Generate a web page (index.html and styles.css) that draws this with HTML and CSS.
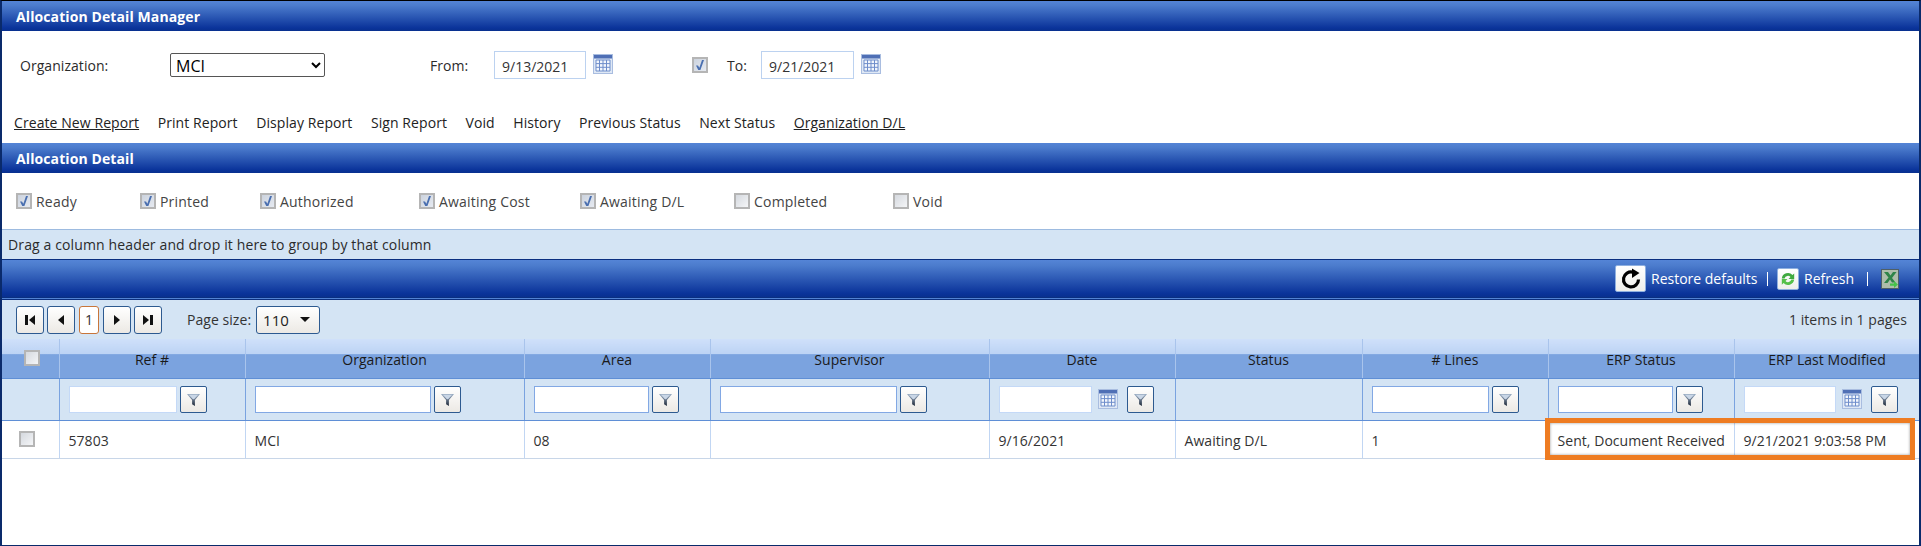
FILE: index.html
```html
<!DOCTYPE html>
<html lang="en">
<head>
<meta charset="utf-8">
<title>Allocation Detail Manager</title>
<link rel="stylesheet" href="styles.css">
</head>
<body>
<svg class="defs" width="0" height="0">
  <defs>
    <linearGradient id="fun" x1="0" y1="0" x2="0" y2="1"><stop offset="0" stop-color="#9fb2c9"/><stop offset="1" stop-color="#1f2a3a"/></linearGradient>
    <symbol id="cal" viewBox="0 0 20 20">
      <rect x="0.5" y="0.5" width="19" height="19" fill="#dfe8f5" stroke="#a9bde0"/>
      <rect x="1" y="1" width="18" height="3.5" fill="#4f6fb5"/>
      <path d="M3 6h14v11H3z" fill="#f2f6fc" stroke="#6f8ecb"/>
      <path d="M6.5 6v11M10 6v11M13.5 6v11M3 9.6h14M3 13.3h14" stroke="#6f8ecb" fill="none"/>
    </symbol>
    <symbol id="filter" viewBox="0 0 16 16">
      <path d="M1 2h14L9.5 8.5V15L6.5 13V8.5z" fill="url(#fun)"/>
      <path d="M3 3h10L8.6 7.6H7.4z" fill="#c9d6e6"/>
    </symbol>
  </defs>
</svg>
<div class="page">
  <header class="bar"><span class="bar-title">Allocation Detail Manager</span></header>
  <section class="form-row">
    <label class="f-org">Organization:</label>
    <select class="org-select"><option>MCI</option></select>
    <label class="f-from">From:</label>
    <input class="date" type="text" value="9/13/2021">
    <svg class="cal-top"><use href="#cal"/></svg>
    <span class="cb checked to-check"></span>
    <label class="f-to">To:</label>
    <input class="date" type="text" value="9/21/2021">
    <svg class="cal-top"><use href="#cal"/></svg>
  </section>
  <nav class="links">
    <a class="ul">Create New Report</a><a>Print Report</a><a>Display Report</a><a>Sign Report</a><a>Void</a><a>History</a><a>Previous Status</a><a>Next Status</a><a class="ul">Organization D/L</a>
  </nav>
  <header class="bar bar2"><span class="bar-title">Allocation Detail</span></header>
  <section class="checks">
    <label class="chk"><span class="cb checked"></span>Ready</label>
    <label class="chk"><span class="cb checked"></span>Printed</label>
    <label class="chk"><span class="cb checked"></span>Authorized</label>
    <label class="chk"><span class="cb checked"></span>Awaiting Cost</label>
    <label class="chk"><span class="cb checked"></span>Awaiting D/L</label>
    <label class="chk"><span class="cb"></span>Completed</label>
    <label class="chk"><span class="cb"></span>Void</label>
  </section>
  <div class="group">Drag a column header and drop it here to group by that column</div>
  <div class="toolbar">
    <span class="tool-btn restore">
      <svg viewBox="0 0 24 24" width="24" height="24"><path d="M19.5 12.5A7.5 7.5 0 1 1 14 5.2" fill="none" stroke="#000" stroke-width="3.2"/><path d="M13 1.5l7.5 4.5-7.5 5z" fill="#000"/></svg>
    </span>
    <span class="tool-text t1">Restore defaults</span>
    <span class="sep s1"></span>
    <span class="tool-btn refresh">
      <svg viewBox="0 0 16 16" width="18" height="18"><path d="M2.5 7.5A5.5 5.5 0 0 1 12 4.5l1.500-1.500v5h-5l1.700-1.700A3 3 0 0 0 5 7.500z" fill="#3fa93f"/><path d="M13.500 8.500A5.500 5.500 0 0 1 4 11.500L2.500 13V8h5l-1.700 1.700A3 3 0 0 0 11 8.500z" fill="#55c04a"/></svg>
    </span>
    <span class="tool-text t2">Refresh</span>
    <span class="sep s2"></span>
    <svg class="excel" viewBox="0 0 18 20" width="18" height="20"><rect x="0.5" y="0.5" width="17" height="19" fill="#aebdaa" stroke="#4f5f66"/><path d="M3 3h4l2.500 3.500L12 3h3.500l-4.500 6 3.500 4.500h-3.500L9 10.500 6.500 14H3l4.500-5.500z" fill="#2f8448"/><path d="M9 14.500h4V12l4 3.500-4 3.500v-2.200H9z" fill="#45c24a"/></svg>
  </div>
  <div class="pager">
    <span class="pg-btn"><i class="bar-l"></i><i class="tri-l"></i></span>
    <span class="pg-btn"><i class="tri-l"></i></span>
    <span class="pg-cur">1</span>
    <span class="pg-btn"><i class="tri-r"></i></span>
    <span class="pg-btn"><i class="tri-r"></i><i class="bar-r"></i></span>
    <span class="pg-label">Page size:</span>
    <span class="pg-size">110<i class="tri-d"></i></span>
    <span class="pg-info">1 items in 1 pages</span>
  </div>
  <table class="grid">
    <colgroup>
      <col class="c0"><col class="c1"><col class="c2"><col class="c1"><col class="c2"><col class="c1"><col class="c3"><col class="c1"><col class="c1"><col class="c1">
    </colgroup>
    <thead>
      <tr class="head">
        <th class="ck-head"><span class="cb"></span></th><th>Ref #</th><th>Organization</th><th>Area</th><th>Supervisor</th><th>Date</th><th>Status</th><th># Lines</th><th>ERP Status</th><th>ERP Last Modified</th>
      </tr>
      <tr class="filters">
        <td></td>
        <td><div class="fc"><input class="fi w108"><span class="fb"><svg><use href="#filter"/></svg></span></div></td>
        <td><div class="fc"><input class="fi fi-d w176"><span class="fb"><svg><use href="#filter"/></svg></span></div></td>
        <td><div class="fc"><input class="fi fi-d w116"><span class="fb"><svg><use href="#filter"/></svg></span></div></td>
        <td><div class="fc"><input class="fi fi-d w177"><span class="fb"><svg><use href="#filter"/></svg></span></div></td>
        <td><div class="fc"><input class="fi w93"><svg class="cal-sm"><use href="#cal"/></svg><span class="fb"><svg><use href="#filter"/></svg></span></div></td>
        <td></td>
        <td><div class="fc"><input class="fi fi-d w117"><span class="fb"><svg><use href="#filter"/></svg></span></div></td>
        <td><div class="fc"><input class="fi fi-d w115"><span class="fb"><svg><use href="#filter"/></svg></span></div></td>
        <td><div class="fc"><input class="fi w92"><svg class="cal-sm"><use href="#cal"/></svg><span class="fb"><svg><use href="#filter"/></svg></span></div></td>
      </tr>
    </thead>
    <tbody>
      <tr class="row">
        <td class="ck"><span class="cb"></span></td><td>57803</td><td>MCI</td><td>08</td><td></td><td>9/16/2021</td><td>Awaiting D/L</td><td>1</td><td>Sent, Document Received</td><td>9/21/2021 9:03:58 PM</td>
      </tr>
    </tbody>
  </table>
  <div class="highlight"></div>
</div>
</body>
</html>
```
FILE: styles.css
```css
* { box-sizing: border-box; }
html, body { margin: 0; padding: 0; background: #fff; }
body { font-family: "Open Sans", "Noto Sans", sans-serif; font-size: 14px; color: #2b2b2b; letter-spacing: 0.05px; }
.defs { position: absolute; }
.page { position: relative; width: 1921px; height: 546px; border: 2px solid #0a2a6b; border-top: 1px solid #000; border-bottom: 1px solid #0a2a6b; overflow: hidden; }

.bar { height: 30px; display: flex; align-items: center; padding-left: 14px; background: linear-gradient(#5484d6, #4c7ccd 15%, #0a339a 90%, #08308f); }
.bar-title { color: #fff; font-weight: 700; font-size: 14px; letter-spacing: 0.1px; }

.form-row { height: 68px; display: flex; align-items: center; }
.f-org { margin-left: 18px; width: 150px; }
.org-select { width: 155px; height: 24px; margin-right: 105px; font: inherit; font-size: 16px; background: #fff; border: 1px solid #555; border-radius: 2px; padding-left: 1px; color: #000; }
.f-from { width: 64px; }
.date { width: 92px; height: 28px; border: 1px solid #bcd2f0; padding: 2px 0 0 7px; font: inherit; font-size: 14px; color: #333; background: #fff; }
.cal-top { width: 20px; height: 20px; margin-left: 7px; margin-bottom: 3px; }
.to-check { margin-left: 79px; margin-right: 19px; }
.f-to { width: 34px; }
.form-row .date:nth-of-type(2) { width: 93px; }

.links { height: 44px; display: flex; align-items: center; gap: 18.5px; padding-left: 12px; padding-top: 2px; letter-spacing: 0.08px; }
.links a { color: #222; }
.links .ul { text-decoration: underline; }

.checks { height: 56px; display: grid; grid-template-columns: 124px 120px 159px 161px 154px 159px auto; align-items: center; padding-left: 14px; }
.chk { display: flex; align-items: center; gap: 4px; color: #444; letter-spacing: 0.2px; }
.cb { display: inline-block; width: 16px; height: 16px; flex: none; border: 2px solid #b5b5b5; background: linear-gradient(135deg, #d5d9df, #f4f5f7); position: relative; }
.cb.checked { background: linear-gradient(135deg, #ccd3de, #e6eaf1); }
.cb.checked::after { content: ""; position: absolute; left: 2px; top: 1px; width: 8px; height: 10px; background: #4a6fb0; clip-path: polygon(0 55%, 25% 55%, 42% 78%, 75% 0, 100% 0, 55% 100%, 28% 100%); }

.group { height: 30px; display: flex; align-items: center; padding-left: 6px; background: #d4e4f4; border-top: 1px solid #9dbbe0; letter-spacing: 0.13px; }
.toolbar { height: 41px; position: relative; display: flex; align-items: center; border-top: 1px solid #0a2f80; border-bottom: 3px double #0a2f80; background: linear-gradient(#5484d6, #4c7ccd 15%, #0a339a 90%, #08308f); color: #fff; padding-left: 1613px; }
.tool-btn { display: flex; align-items: center; justify-content: center; background: linear-gradient(#fff, #eeeeea); border: 1px solid #8fb0e0; border-radius: 2px; }
.restore { width: 31px; height: 27px; }
.refresh { width: 22px; height: 22px; margin-top: 1px; }
.tool-text { color: #fff; font-size: 14px; letter-spacing: 0; white-space: nowrap; }
.t1 { margin-left: 5px; width: 106px; }
.sep { width: 1px; height: 14px; background: #fff; }
.s1 { margin-left: 10px; margin-right: 9px; }
.t2 { margin-left: 5px; width: 48px; }
.s2 { margin-left: 15px; margin-right: 13px; }
.excel { flex: none; }

.pager { height: 39px; display: flex; align-items: center; background: #d4e4f4; padding-left: 14px; padding-right: 12px; color: #333; }
.pg-btn { width: 28px; height: 28px; margin-right: 3px; display: flex; align-items: center; justify-content: center; gap: 1px; border: 1px solid #2d5a90; border-radius: 3px; background: linear-gradient(#fff, #ece9e4); }
.pg-cur { width: 20px; height: 28px; margin: 0 4px 0 1px; display: flex; align-items: center; justify-content: center; border: 1px solid #c8763a; border-radius: 3px; background: #fff; }
.tri-l, .tri-r, .tri-d, .bar-l, .bar-r { display: block; }
.tri-l { border: 5px solid transparent; border-left-width: 0; border-right: 6px solid #111; }
.tri-r { border: 5px solid transparent; border-right-width: 0; border-left: 6px solid #111; }
.bar-l, .bar-r { width: 3px; height: 10px; background: #111; }
.pg-label { margin-left: 22px; margin-right: 5px; }
.pg-size { width: 64px; height: 28px; display: flex; align-items: center; justify-content: space-between; padding: 0 9px 0 6px; border: 1px solid #2d5a90; border-radius: 3px; background: linear-gradient(#fff, #ece9e4); font-size: 15px; color: #222; }
.tri-d { border: 5px solid transparent; border-bottom-width: 0; border-top: 5px solid #111; }
.pg-info { margin-left: auto; }

.grid { border-collapse: collapse; table-layout: fixed; width: 1918px; }
.c0 { width: 57px; }
.c1 { width: 186px; }
.c2 { width: 279px; }
.c3 { width: 187px; }
.head th { height: 39px; padding: 2px 0 0; font-weight: 400; color: #1a1a1a; text-align: center; background: linear-gradient(#cfe0fa, #bcd3f4 38%, #7ba3df 40%, #7ba3df); border-right: 1px solid #a9c4ec; border-bottom: 1px solid #5f8fd6; }
.head .ck-head { padding: 4px 0 0 4px; }
.filters td { height: 42px; padding: 0; background: #d4e4f4; border-right: 1px solid #7aa3e0; border-bottom: 1px solid #5f8fd6; }
.fc { display: flex; align-items: center; padding-left: 9px; }
.fi { height: 27px; padding: 0; background: #fff; border: 1px solid #c4d9f7; }
.fi-d { border-color: #82a8e4; }
.w108 { width: 108px; } .w176 { width: 176px; } .w116 { width: 115px; } .w177 { width: 177px; }
.w93 { width: 93px; } .w92 { width: 92px; } .w117 { width: 117px; } .w115 { width: 115px; }
.fb { width: 27px; height: 27px; margin-left: 3px; display: flex; align-items: center; justify-content: center; flex: none; border: 1px solid #2d5a90; border-radius: 2px; background: linear-gradient(#fff, #ece9e4); }
.fb svg { width: 15px; height: 15px; }
.cal-sm { width: 20px; height: 20px; margin-left: 6px; margin-right: 6px; flex: none; }
.row td { height: 38px; padding: 2px 0 0 9px; color: #333; background: #fff; border-right: 1px solid #c1d6f3; border-bottom: 1px solid #c8d6e8; white-space: nowrap; }
.row .ck { padding: 3px 0 0 17px; }

.highlight { position: absolute; left: 1543px; top: 417px; width: 370px; height: 42px; border: 5px solid #ee7c22; box-shadow: inset 0 0 3px rgba(0,0,0,.4); pointer-events: none; }
```
